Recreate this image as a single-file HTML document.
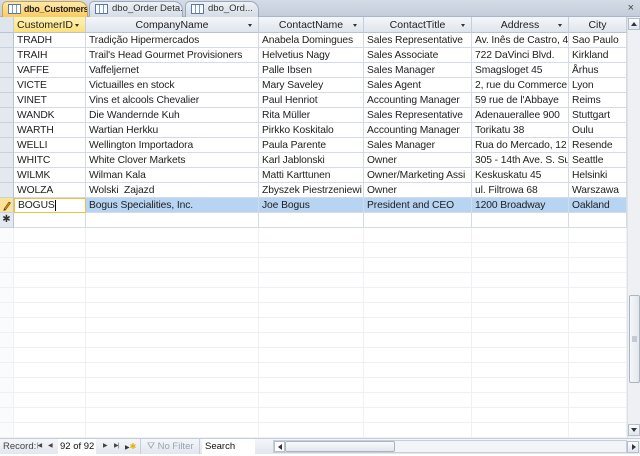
<!DOCTYPE html>
<html><head><meta charset="utf-8"><style>
*{margin:0;padding:0;box-sizing:border-box}
body{width:640px;height:454px;overflow:hidden;background:#fff;font-family:"Liberation Sans",sans-serif;font-size:10.5px;color:#1e1e1e;position:relative;white-space:nowrap}
.a{position:absolute}
#tabs{left:0;top:0;width:640px;height:17px;background:linear-gradient(#d4dce6,#c3cdd9);border-bottom:1px solid #a9b6c6}
.tab{position:absolute;top:1px;height:16px;border:1px solid #9aa8ba;border-bottom:none;border-radius:5px 9px 0 0;background:linear-gradient(#eef1f5,#d5dce5);font-size:9.5px;line-height:14px;padding-left:22px;color:#333;overflow:hidden}
.tab.on{background:linear-gradient(#ffe9a8,#fbc85a);font-weight:bold;color:#222;border-color:#c9a24a;height:17px;font-size:8.8px;padding-left:21px;letter-spacing:-0.2px}
.ti{position:absolute;left:5px;top:2px;width:13px;height:10px;border:1px solid #5a78a6;background:repeating-linear-gradient(90deg,#fff 0 3px,#7d98c2 3px 4px)}
.hd{position:absolute;top:17px;height:16px;background:linear-gradient(#f4f6f9,#dfe5ed);border-right:1px solid #c5cedb;border-bottom:1px solid #b9c4d2;text-align:center;line-height:16px;font-size:10.5px;color:#222}
.hd.sel{background:linear-gradient(#fff3b8,#fde07a)}
.dd{position:absolute;right:6px;top:7px;width:0;height:0;border-left:2.5px solid transparent;border-right:2.5px solid transparent;border-top:3px solid #333}
.row{position:absolute;left:0;width:627px;height:15px}
.c{position:absolute;top:0;height:15px;border-right:1px solid #d5dbe4;border-bottom:1px solid #d5dbe4;padding-left:3px;line-height:15px;white-space:nowrap;overflow:hidden;font-size:10.3px;letter-spacing:-0.1px}
.s{position:absolute;left:0;top:0;width:14px;height:15px;background:#e4e9f0;border-right:1px solid #b9c4d2;border-bottom:1px solid #c9d1dc}
.e .c{border-color:#eef0f3}
.e .s{background:#fafbfc;border-color:#eef0f3}
</style></head><body>
<div id="tabs" class="a">
<div class="tab on" style="left:2px;width:86px"><span class="ti"></span>dbo_Customers</div>
<div class="tab" style="left:89px;width:94px"><span class="ti"></span>dbo_Order Deta...</div>
<div class="tab" style="left:185px;width:74px"><span class="ti"></span>dbo_Ord...</div>
<div class="a" style="right:6px;top:2px;font-size:11px;color:#444">×</div>
</div>
<div class="hd" style="left:0;width:14px;background:#dfe5ed"></div>
<div class="hd sel" style="left:14px;width:72px;text-align:left;padding-left:3px">CustomerID<span class="dd"></span></div>
<div class="hd" style="left:86px;width:173px">CompanyName<span class="dd"></span></div>
<div class="hd" style="left:259px;width:105px">ContactName<span class="dd"></span></div>
<div class="hd" style="left:364px;width:108px">ContactTitle<span class="dd"></span></div>
<div class="hd" style="left:472px;width:97px">Address<span class="dd"></span></div>
<div class="hd" style="left:569px;width:58px">City</div>

<div class="row" style="top:33px"><div class="s"></div><div class="c" style="left:14px;width:72px">TRADH</div><div class="c" style="left:86px;width:173px">Tradição Hipermercados</div><div class="c" style="left:259px;width:105px">Anabela Domingues</div><div class="c" style="left:364px;width:108px">Sales Representative</div><div class="c" style="left:472px;width:97px">Av. Inês de Castro, 4</div><div class="c" style="left:569px;width:58px">Sao Paulo</div></div>
<div class="row" style="top:48px"><div class="s"></div><div class="c" style="left:14px;width:72px">TRAIH</div><div class="c" style="left:86px;width:173px">Trail's Head Gourmet Provisioners</div><div class="c" style="left:259px;width:105px">Helvetius Nagy</div><div class="c" style="left:364px;width:108px">Sales Associate</div><div class="c" style="left:472px;width:97px">722 DaVinci Blvd.</div><div class="c" style="left:569px;width:58px">Kirkland</div></div>
<div class="row" style="top:63px"><div class="s"></div><div class="c" style="left:14px;width:72px">VAFFE</div><div class="c" style="left:86px;width:173px">Vaffeljernet</div><div class="c" style="left:259px;width:105px">Palle Ibsen</div><div class="c" style="left:364px;width:108px">Sales Manager</div><div class="c" style="left:472px;width:97px">Smagsloget 45</div><div class="c" style="left:569px;width:58px">Århus</div></div>
<div class="row" style="top:78px"><div class="s"></div><div class="c" style="left:14px;width:72px">VICTE</div><div class="c" style="left:86px;width:173px">Victuailles en stock</div><div class="c" style="left:259px;width:105px">Mary Saveley</div><div class="c" style="left:364px;width:108px">Sales Agent</div><div class="c" style="left:472px;width:97px">2, rue du Commerce</div><div class="c" style="left:569px;width:58px">Lyon</div></div>
<div class="row" style="top:93px"><div class="s"></div><div class="c" style="left:14px;width:72px">VINET</div><div class="c" style="left:86px;width:173px">Vins et alcools Chevalier</div><div class="c" style="left:259px;width:105px">Paul Henriot</div><div class="c" style="left:364px;width:108px">Accounting Manager</div><div class="c" style="left:472px;width:97px">59 rue de l'Abbaye</div><div class="c" style="left:569px;width:58px">Reims</div></div>
<div class="row" style="top:108px"><div class="s"></div><div class="c" style="left:14px;width:72px">WANDK</div><div class="c" style="left:86px;width:173px">Die Wandernde Kuh</div><div class="c" style="left:259px;width:105px">Rita Müller</div><div class="c" style="left:364px;width:108px">Sales Representative</div><div class="c" style="left:472px;width:97px">Adenauerallee 900</div><div class="c" style="left:569px;width:58px">Stuttgart</div></div>
<div class="row" style="top:123px"><div class="s"></div><div class="c" style="left:14px;width:72px">WARTH</div><div class="c" style="left:86px;width:173px">Wartian Herkku</div><div class="c" style="left:259px;width:105px">Pirkko Koskitalo</div><div class="c" style="left:364px;width:108px">Accounting Manager</div><div class="c" style="left:472px;width:97px">Torikatu 38</div><div class="c" style="left:569px;width:58px">Oulu</div></div>
<div class="row" style="top:138px"><div class="s"></div><div class="c" style="left:14px;width:72px">WELLI</div><div class="c" style="left:86px;width:173px">Wellington Importadora</div><div class="c" style="left:259px;width:105px">Paula Parente</div><div class="c" style="left:364px;width:108px">Sales Manager</div><div class="c" style="left:472px;width:97px">Rua do Mercado, 12</div><div class="c" style="left:569px;width:58px">Resende</div></div>
<div class="row" style="top:153px"><div class="s"></div><div class="c" style="left:14px;width:72px">WHITC</div><div class="c" style="left:86px;width:173px">White Clover Markets</div><div class="c" style="left:259px;width:105px">Karl Jablonski</div><div class="c" style="left:364px;width:108px">Owner</div><div class="c" style="left:472px;width:97px">305 - 14th Ave. S. Sui</div><div class="c" style="left:569px;width:58px">Seattle</div></div>
<div class="row" style="top:168px"><div class="s"></div><div class="c" style="left:14px;width:72px">WILMK</div><div class="c" style="left:86px;width:173px">Wilman Kala</div><div class="c" style="left:259px;width:105px">Matti Karttunen</div><div class="c" style="left:364px;width:108px">Owner/Marketing Assi</div><div class="c" style="left:472px;width:97px">Keskuskatu 45</div><div class="c" style="left:569px;width:58px">Helsinki</div></div>
<div class="row" style="top:183px"><div class="s"></div><div class="c" style="left:14px;width:72px">WOLZA</div><div class="c" style="left:86px;width:173px">Wolski&nbsp; Zajazd</div><div class="c" style="left:259px;width:105px">Zbyszek Piestrzeniewi</div><div class="c" style="left:364px;width:108px">Owner</div><div class="c" style="left:472px;width:97px">ul. Filtrowa 68</div><div class="c" style="left:569px;width:58px">Warszawa</div></div>
<div class="row" style="top:198px;background:#b7d4f3"><div class="s" style="background:#fbe39a"><svg width="14" height="15"><path d="M4 11 L9 4 L10.5 5 L5.5 12 Z" fill="#d88a10" stroke="#6b3f00" stroke-width=".6"/><path d="M4 11 L3.5 13 L5.5 12" fill="#333"/></svg></div><div class="c" style="left:14px;width:72px;background:#fff;border:1px solid #f0c040;line-height:13px">BOGUS<span style="border-left:1px solid #000">&#8203;</span></div><div class="c" style="left:86px;width:173px">Bogus Specialities, Inc.</div><div class="c" style="left:259px;width:105px">Joe Bogus</div><div class="c" style="left:364px;width:108px">President and CEO</div><div class="c" style="left:472px;width:97px">1200 Broadway</div><div class="c" style="left:569px;width:58px">Oakland</div></div>
<div class="row" style="top:213px"><div class="s" style="text-align:center;line-height:14px;font-size:10px;color:#333">✱</div><div class="c" style="left:14px;width:72px"></div><div class="c" style="left:86px;width:173px"></div><div class="c" style="left:259px;width:105px"></div><div class="c" style="left:364px;width:108px"></div><div class="c" style="left:472px;width:97px"></div><div class="c" style="left:569px;width:58px"></div></div>

<div class="a" style="left:0;top:228px;width:627px;height:210px;overflow:hidden">
<div class="e" style="position:relative">
<div class="row" style="top:0"><div class="s"></div><div class="c" style="left:14px;width:72px"></div><div class="c" style="left:86px;width:173px"></div><div class="c" style="left:259px;width:105px"></div><div class="c" style="left:364px;width:108px"></div><div class="c" style="left:472px;width:97px"></div><div class="c" style="left:569px;width:58px"></div></div>
<div class="row" style="top:15px"><div class="s"></div><div class="c" style="left:14px;width:72px"></div><div class="c" style="left:86px;width:173px"></div><div class="c" style="left:259px;width:105px"></div><div class="c" style="left:364px;width:108px"></div><div class="c" style="left:472px;width:97px"></div><div class="c" style="left:569px;width:58px"></div></div>
<div class="row" style="top:30px"><div class="s"></div><div class="c" style="left:14px;width:72px"></div><div class="c" style="left:86px;width:173px"></div><div class="c" style="left:259px;width:105px"></div><div class="c" style="left:364px;width:108px"></div><div class="c" style="left:472px;width:97px"></div><div class="c" style="left:569px;width:58px"></div></div>
<div class="row" style="top:45px"><div class="s"></div><div class="c" style="left:14px;width:72px"></div><div class="c" style="left:86px;width:173px"></div><div class="c" style="left:259px;width:105px"></div><div class="c" style="left:364px;width:108px"></div><div class="c" style="left:472px;width:97px"></div><div class="c" style="left:569px;width:58px"></div></div>
<div class="row" style="top:60px"><div class="s"></div><div class="c" style="left:14px;width:72px"></div><div class="c" style="left:86px;width:173px"></div><div class="c" style="left:259px;width:105px"></div><div class="c" style="left:364px;width:108px"></div><div class="c" style="left:472px;width:97px"></div><div class="c" style="left:569px;width:58px"></div></div>
<div class="row" style="top:75px"><div class="s"></div><div class="c" style="left:14px;width:72px"></div><div class="c" style="left:86px;width:173px"></div><div class="c" style="left:259px;width:105px"></div><div class="c" style="left:364px;width:108px"></div><div class="c" style="left:472px;width:97px"></div><div class="c" style="left:569px;width:58px"></div></div>
<div class="row" style="top:90px"><div class="s"></div><div class="c" style="left:14px;width:72px"></div><div class="c" style="left:86px;width:173px"></div><div class="c" style="left:259px;width:105px"></div><div class="c" style="left:364px;width:108px"></div><div class="c" style="left:472px;width:97px"></div><div class="c" style="left:569px;width:58px"></div></div>
<div class="row" style="top:105px"><div class="s"></div><div class="c" style="left:14px;width:72px"></div><div class="c" style="left:86px;width:173px"></div><div class="c" style="left:259px;width:105px"></div><div class="c" style="left:364px;width:108px"></div><div class="c" style="left:472px;width:97px"></div><div class="c" style="left:569px;width:58px"></div></div>
<div class="row" style="top:120px"><div class="s"></div><div class="c" style="left:14px;width:72px"></div><div class="c" style="left:86px;width:173px"></div><div class="c" style="left:259px;width:105px"></div><div class="c" style="left:364px;width:108px"></div><div class="c" style="left:472px;width:97px"></div><div class="c" style="left:569px;width:58px"></div></div>
<div class="row" style="top:135px"><div class="s"></div><div class="c" style="left:14px;width:72px"></div><div class="c" style="left:86px;width:173px"></div><div class="c" style="left:259px;width:105px"></div><div class="c" style="left:364px;width:108px"></div><div class="c" style="left:472px;width:97px"></div><div class="c" style="left:569px;width:58px"></div></div>
<div class="row" style="top:150px"><div class="s"></div><div class="c" style="left:14px;width:72px"></div><div class="c" style="left:86px;width:173px"></div><div class="c" style="left:259px;width:105px"></div><div class="c" style="left:364px;width:108px"></div><div class="c" style="left:472px;width:97px"></div><div class="c" style="left:569px;width:58px"></div></div>
<div class="row" style="top:165px"><div class="s"></div><div class="c" style="left:14px;width:72px"></div><div class="c" style="left:86px;width:173px"></div><div class="c" style="left:259px;width:105px"></div><div class="c" style="left:364px;width:108px"></div><div class="c" style="left:472px;width:97px"></div><div class="c" style="left:569px;width:58px"></div></div>
<div class="row" style="top:180px"><div class="s"></div><div class="c" style="left:14px;width:72px"></div><div class="c" style="left:86px;width:173px"></div><div class="c" style="left:259px;width:105px"></div><div class="c" style="left:364px;width:108px"></div><div class="c" style="left:472px;width:97px"></div><div class="c" style="left:569px;width:58px"></div></div>
<div class="row" style="top:195px"><div class="s"></div><div class="c" style="left:14px;width:72px"></div><div class="c" style="left:86px;width:173px"></div><div class="c" style="left:259px;width:105px"></div><div class="c" style="left:364px;width:108px"></div><div class="c" style="left:472px;width:97px"></div><div class="c" style="left:569px;width:58px"></div></div>
</div></div>

<div class="a" style="left:627px;top:17px;width:13px;height:421px;background:#eef0f3;border-left:1px solid #dde2e8"></div>
<div class="a" style="left:628px;top:18px;width:12px;height:12px;background:linear-gradient(#fdfdfd,#e0e5ec);border:1px solid #b4bfcd"><div class="a" style="left:2px;top:3px;border-left:3px solid transparent;border-right:3px solid transparent;border-bottom:4px solid #334"></div></div>
<div class="a" style="left:629px;top:295px;width:11px;height:88px;background:linear-gradient(90deg,#f6f7f9,#e3e7ec);border:1px solid #aab4c2;border-radius:2px"><div class="a" style="left:2px;top:40px;width:5px;height:6px;background:#c4cbd4"></div></div>
<div class="a" style="left:628px;top:424px;width:12px;height:12px;background:linear-gradient(#fdfdfd,#e0e5ec);border:1px solid #b4bfcd"><div class="a" style="left:2px;top:3px;border-left:3px solid transparent;border-right:3px solid transparent;border-top:4px solid #334"></div></div>

<div class="a" style="left:0;top:438px;width:640px;height:16px;background:linear-gradient(#f4f6f9,#e2e7ee);border-top:1px solid #c5cedb;font-size:10px;color:#333;line-height:15px">
<span class="a" style="left:3px;font-size:9.5px;color:#444">Record:</span>
<span class="a" style="left:37px;font-size:6px;letter-spacing:-1px;color:#444">|◀</span>
<span class="a" style="left:48px;font-size:6px;color:#444">◀</span>
<span class="a" style="left:58px;top:0;width:38px;height:15px;background:#fff;padding-left:2px;color:#111;font-size:9.5px">92 of 92</span>
<span class="a" style="left:103px;font-size:6px;color:#444">▶</span>
<span class="a" style="left:114px;font-size:6px;letter-spacing:-1px;color:#444">▶|</span>
<span class="a" style="left:125px;font-size:6px">▶<span style="color:#e6b000;font-size:8px">✱</span></span>
<span class="a" style="left:140px;width:1px;height:15px;background:#c5cedb"></span>
<span class="a" style="left:147px;color:#9aa3ad;font-size:9.5px">⛛ No Filter</span>
<span class="a" style="left:199px;width:1px;height:15px;background:#c5cedb"></span>
<span class="a" style="left:202px;top:0;width:53px;height:15px;background:#fff;padding-left:3px;color:#111;font-size:9.5px">Search</span>
<span class="a" style="left:273px;top:1px;width:354px;height:13px;background:#f2f4f7;border:1px solid #c5cedb"></span>
<span class="a" style="left:274px;top:2px;width:11px;height:11px;border:1px solid #b4bfcd;background:#fff"><span class="a" style="left:3px;top:2px;border-top:3px solid transparent;border-bottom:3px solid transparent;border-right:4px solid #334"></span></span>
<span class="a" style="left:285px;top:2px;width:110px;height:11px;border:1px solid #aab4c2;border-radius:2px;background:linear-gradient(#f8f9fb,#e3e7ec)"></span>
<span class="a" style="left:627px;top:2px;width:12px;height:12px;border:1px solid #b4bfcd;background:linear-gradient(#fdfdfd,#e0e5ec)"><span class="a" style="left:4px;top:2px;border-top:3px solid transparent;border-bottom:3px solid transparent;border-left:4px solid #334"></span></span>
</div>
</body></html>
